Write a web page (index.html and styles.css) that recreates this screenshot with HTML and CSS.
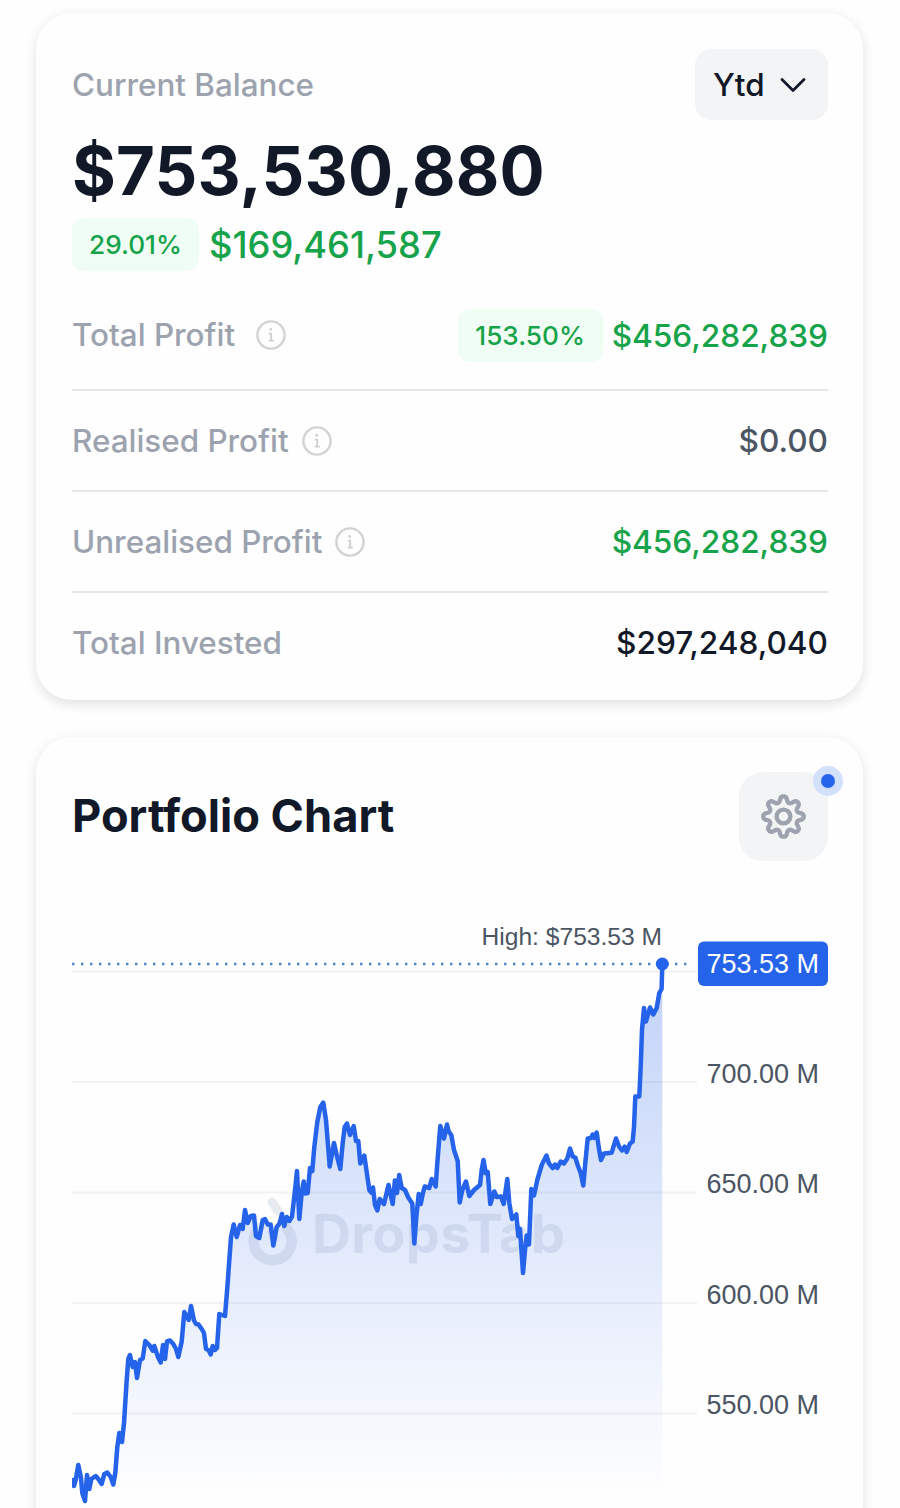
FILE: index.html
```
<!DOCTYPE html>
<html lang="en">
<head>
    <meta charset="UTF-8">
    <title>Portfolio</title>
    <link rel="stylesheet" href="styles.css">
</head>
<body>
    <svg class="sprite">
        <symbol id="info" viewBox="0 0 30 30">
            <circle cx="15" cy="15" r="13.6" fill="none" stroke="#d1d3d6" stroke-width="2.4"/>
            <circle cx="14.7" cy="9.4" r="1.4" fill="#ccced2"/>
            <path d="M12.8 13.6h2.4v7M12.8 20.6h5" fill="none" stroke="#ccced2" stroke-width="1.8"/>
        </symbol>
    </svg>

    <div class="container">
        <section class="card balance">
            <div class="card-head">
                <span class="label">Current Balance</span>
                <button class="period">
                    Ytd
                    <svg width="26" height="16" viewBox="0 0 26 16"><path d="M2 2.5l11 11L24 2.5" fill="none" stroke="#111827" stroke-width="2.8" stroke-linecap="round" stroke-linejoin="round"/></svg>
                </button>
            </div>
            <h1>$753,530,880</h1>
            <div class="change">
                <span class="badge">29.01%</span>
                <span class="change-value">$169,461,587</span>
            </div>

            <div class="row row-first">
                <span class="label">Total Profit</span>
                <svg class="info info-wide"><use href="#info"/></svg>
                <span class="badge badge-wide">153.50%</span>
                <span class="value green">$456,282,839</span>
            </div>
            <div class="row">
                <span class="label">Realised Profit</span>
                <svg class="info"><use href="#info"/></svg>
                <span class="value gray">$0.00</span>
            </div>
            <div class="row">
                <span class="label">Unrealised Profit</span>
                <svg class="info"><use href="#info"/></svg>
                <span class="value green">$456,282,839</span>
            </div>
            <div class="row">
                <span class="label">Total Invested</span>
                <span class="value">$297,248,040</span>
            </div>
        </section>

        <section class="card chart-card">
            <div class="card-head">
                <h2>Portfolio Chart</h2>
                <button class="settings">
                    <svg width="46" height="46" viewBox="0.5 0.5 46 46" fill="none" stroke="#9ca3af" stroke-width="4.3">
                        <path id="gear" stroke-linejoin="round"/>
                        <circle cx="23" cy="23" r="6.9"/>
                    </svg>
                    <span class="dot"></span>
                </button>
            </div>

            <svg class="chart" width="756" height="640" viewBox="72 900 756 640">
                <defs>
                    <linearGradient id="fill" gradientUnits="userSpaceOnUse" x1="0" y1="964" x2="0" y2="1500">
                        <stop offset="0" stop-color="#2563eb" stop-opacity="0.28"/>
                        <stop offset="1" stop-color="#2563eb" stop-opacity="0"/>
                    </linearGradient>
                </defs>
                <path class="grid" d="M72 971.5H697M72 1082H697M72 1192.5H697M72 1303H697M72 1413.5H697"/>
                <path id="area" fill="url(#fill)"/>
                <g class="watermark">
                    <path d="M259 1228A19 19 0 1 0 287 1229" fill="none" stroke-width="10.5" stroke-linecap="round"/>
                    <path d="M272 1202l6 9M272 1231l2 7" stroke-width="9" stroke-linecap="round"/>
                    <text x="312" y="1253" textLength="253">DropsTab</text>
                </g>
                <path class="high-line" d="M72 964H692"/>
                <path id="line" class="line"/>
                <circle cx="662.3" cy="964" r="6.5" fill="#2563eb"/>
                <text class="high" x="662" y="945">High: $753.53 M</text>
                <g class="axis">
                    <text x="819" y="1082.5">700.00 M</text>
                    <text x="819" y="1193">650.00 M</text>
                    <text x="819" y="1303.5">600.00 M</text>
                    <text x="819" y="1414">550.00 M</text>
                </g>
                <rect x="698" y="941.5" width="130" height="44.5" rx="6" fill="#2563eb"/>
                <text class="current" x="819" y="973">753.53 M</text>
            </svg>
        </section>
    </div>

    <script src="chart.js"></script>
</body>
</html>
```
FILE: chart.js
```
const points = [
    [73.3,1480],[74,1486],[75.7,1480],[78.3,1465],[81,1478],[82.3,1493],[85,1501],[87,1475],[89.3,1489],[91.3,1479],
    [95.7,1476],[98.3,1479],[101.7,1484],[104.3,1474],[107.3,1472.5],[110.7,1477],[113.3,1484.5],[115.3,1473],[117.3,1447],[119.3,1433],
    [122,1442],[124,1423],[126.7,1380],[128.3,1359],[130,1355],[132.7,1367],[135,1362],[137,1378],[140,1360],[142.7,1358.5],
    [145.3,1341],[149.3,1345],[152.7,1350.7],[154.3,1346],[158,1357],[160.7,1362.5],[163,1345],[165,1359],[167,1341.5],[170,1340.5],
    [173.3,1344],[176,1349],[178.3,1357],[181.7,1341.5],[184.3,1312],[188.7,1320],[191,1306],[194,1320.5],[196,1324],[198.5,1324.5],
    [201.7,1329],[204,1333],[206,1349],[208.5,1350],[210.7,1354.5],[212.7,1346],[215,1350],[217,1348],[219.3,1314],[225,1316],
    [227.3,1288],[231,1237],[233.7,1224.5],[236.7,1237],[240,1225],[242.7,1229],[245,1210],[247.7,1223],[250.7,1216],[254,1215.5],
    [256,1236],[259.3,1238],[262.7,1220],[265,1219],[267.7,1224.5],[270.7,1224.5],[273.3,1245.5],[276.7,1227],[279.3,1224],[282,1214],
    [284.3,1226],[286.7,1217],[289.3,1221],[292,1216.5],[294.7,1193],[297,1171],[299.3,1219],[301.7,1193],[303.7,1181.5],[305.3,1193.5],
    [307.7,1193],[310,1168],[312.3,1171],[314.3,1147],[317.3,1122],[320.3,1107],[323.3,1102.5],[326,1120],[329.7,1166.5],[334,1143],
    [337,1156.5],[340.3,1169],[342.7,1143],[344.7,1127],[347,1123.5],[350,1135],[353.7,1126],[356,1141],[358.3,1141],[360.3,1163.5],
    [364.3,1155.5],[366.7,1172],[369.3,1190],[371.3,1192.5],[373,1187.5],[375,1205],[377.3,1210.5],[379.7,1199],[384,1204],[388.5,1185],
    [392.7,1204],[394.9,1180.5],[397,1193],[399.2,1175],[401.7,1188],[405,1190],[408.3,1197.5],[412.3,1203.5],[414.3,1243.5],[416.3,1217],
    [418.7,1194],[420.7,1204],[422.7,1194],[424.7,1186.5],[429.3,1188],[431.7,1179],[435.7,1186.5],[437.3,1163],[440.3,1126],[444,1138.5],
    [447,1124.5],[448.7,1131.5],[451.3,1135],[454,1150],[457.7,1161],[459.7,1202.5],[462.3,1190],[466,1181.5],[469.3,1196],[474,1190],
    [480,1185],[481.7,1170],[483.5,1160],[485.7,1173],[487.7,1172],[490.3,1204],[494.3,1191.5],[496.7,1197],[501,1196.5],[503.7,1204],
    [507.3,1179],[509.3,1203],[512,1219],[516.3,1214.5],[518.3,1236],[520,1229],[523,1273],[525,1250],[526.7,1235.5],[529,1244.5],
    [531.3,1189],[534,1195.5],[537.3,1180],[541.7,1165],[546.5,1155.5],[549,1163.5],[552.7,1168],[555,1164.5],[557.3,1168],[560.7,1161.5],
    [564,1163.5],[567.3,1158.5],[570,1148.5],[572.7,1156.5],[575.3,1157.5],[578,1166],[580.7,1173],[583.3,1185.5],[585.3,1163],[587.7,1138.5],
    [591,1138],[592.7,1134.5],[594.3,1138],[596.7,1132.5],[598.7,1147],[601,1160],[604,1153.5],[611.7,1152.7],[616,1138.5],[619.3,1147],
    [622,1150.5],[624.7,1146.5],[626.7,1152],[630,1143.5],[632.7,1141.5],[634,1127],[635.3,1096.5],[639.3,1096.5],[640.7,1067],[642,1030],
    [644,1008],[646,1021.5],[650,1007.5],[653.3,1014.5],[656.7,1008],[659.3,993],[661.6,989],[662.3,964]
];

const line = "M" + points.map(p => p.join(" ")).join("L");
document.getElementById("line").setAttribute("d", line);
document.getElementById("area").setAttribute("d", line + "V1520H73Z");

// Gear outline with eight rounded teeth
let gear = "";
for (let i = 0; i <= 160; i++) {
    const a = i / 160 * Math.PI * 2;
    const r = 17.4 + 2.8 * Math.tanh(1.4 * Math.cos(8 * a)) / 0.885;
    gear += (i ? "L" : "M") + (23 + r * Math.sin(a)).toFixed(2) + " " + (23 - r * Math.cos(a)).toFixed(2);
}
document.getElementById("gear").setAttribute("d", gear + "Z");
```
FILE: styles.css
```
* {
    box-sizing: border-box;
}

body {
    font-family: Inter, sans-serif;
    margin: 0;
    height: 100vh;
    overflow: hidden;
    background-color: #fefefe;
    color: #111827;
}

.sprite {
    display: none;
}

.container {
    padding: 13px 37px 0 36px;
}

.card {
    background-color: #fefefe;
    border-radius: 36px;
    padding: 36px 35px 0 36px;
    box-shadow: 0 5px 12px rgba(0, 0, 0, 0.09), 0 0 16px rgba(0, 0, 0, 0.03);
}

.balance {
    height: 687px;
    margin-bottom: 37px;
}

.card-head {
    display: flex;
    justify-content: space-between;
    align-items: center;
}

button {
    border: none;
    font-family: inherit;
    background-color: #f3f4f6;
}

.label {
    font-size: 31.4px;
    font-weight: 450;
    line-height: 40px;
    color: #9ca3af;
}

.period {
    display: flex;
    align-items: center;
    gap: 15px;
    width: 133px;
    height: 71px;
    padding: 0 0 0 18px;
    border-radius: 16px;
    font-size: 31.4px;
    font-weight: 450;
    color: #111827;
}

h1 {
    margin: 10px 0 7px;
    font-size: 67px;
    line-height: 81px;
    font-weight: 700;
    letter-spacing: 0.15px;
}

.change {
    display: flex;
    align-items: center;
    gap: 10px;
    height: 53px;
}

.badge {
    width: 127px;
    height: 53px;
    line-height: 53px;
    text-align: center;
    border-radius: 12px;
    background-color: #f0fdf4;
    color: #16a34a;
    font-size: 26.2px;
    font-weight: 450;
}

.badge-wide {
    width: 145px;
    margin-left: auto;
    margin-right: 9px;
}

.change-value {
    font-size: 36.3px;
    font-weight: 450;
    color: #16a34a;
}

.row {
    display: flex;
    align-items: center;
    height: 101px;
    border-bottom: 2px solid #e5e7eb;
}

.row-first {
    height: 120px;
    padding-top: 10px;
}

.row:last-child {
    height: 99px;
    border-bottom: none;
}

.info {
    width: 30px;
    height: 30px;
    margin-left: 13px;
}

.info-wide {
    margin-left: 21px;
}

.value {
    margin-left: auto;
    font-size: 31.6px;
    font-weight: 450;
}

.badge + .value {
    margin-left: 0;
}

.green {
    color: #16a34a;
}

.gray {
    color: #4b5563;
}

h2 {
    margin: -2px 0 0;
    font-size: 45.2px;
    font-weight: 700;
}

.settings {
    position: relative;
    display: flex;
    align-items: center;
    justify-content: center;
    width: 89px;
    height: 89px;
    padding: 0;
    border-radius: 24px;
}

.dot {
    position: absolute;
    top: -6px;
    right: -15px;
    width: 30px;
    height: 30px;
    border: 8px solid #d3e0fb;
    border-radius: 50%;
    background-color: #2563eb;
}

.chart-card {
    padding-top: 35px;
}

.chart {
    display: block;
    margin-top: 39px;
}

.grid {
    stroke: #f1f2f4;
    stroke-width: 2;
}

.line {
    fill: none;
    stroke: #2563eb;
    stroke-width: 4.5;
    stroke-linejoin: round;
    stroke-linecap: round;
}

.high-line {
    stroke: #4f84c4;
    stroke-width: 2.4;
    stroke-dasharray: 2.4 6.6;
}

.watermark {
    stroke: #6b7fa8;
    opacity: 0.15;
}

.watermark text {
    font-size: 54px;
    font-weight: 700;
    fill: #6b7fa8;
    stroke: none;
}

.high, .axis, .current {
    font-family: "Liberation Sans", Arial, sans-serif;
    font-size: 27px;
    fill: #4b5563;
    text-anchor: end;
}

.high {
    font-size: 24.6px;
}

.current {
    fill: #fff;
}
```
